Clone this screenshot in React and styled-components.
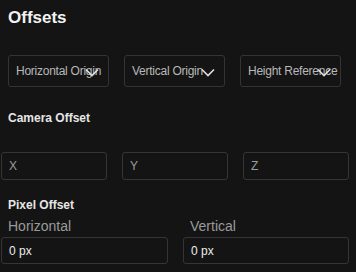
import React from 'react'
import styled, { createGlobalStyle } from 'styled-components'

const Global = createGlobalStyle`
  html, body { margin:0; padding:0; background:#141414; }
  body { font-family: "Liberation Sans", Arial, sans-serif; }
  * { box-sizing:border-box; }
`

const Panel = styled.div`
  width:356px;
  height:272px;
  padding-top:8px;
  background:#141414;
  display:flex;
  flex-direction:column;
  overflow:hidden;
`
const Title = styled.h2`
  margin:0 0 0 8px;
  font-size:17px;
  line-height:20px;
  font-weight:700;
  color:#f2f2f2;
`
const SelectRow = styled.div`
  display:grid;
  grid-template-columns:repeat(3, 101px);
  column-gap:15px;
  margin:27px 0 0 8px;
`
const SelectBox = styled.div`
  position:relative;
  height:32px;
  border:1px solid #343434;
  border-radius:3px;
  display:flex;
  align-items:center;
  padding-left:7px;
  white-space:nowrap;
  font-size:12px;
  letter-spacing:-0.25px;
  color:#b8b8b8;
`
const Chevron = styled.svg`
  position:absolute;
  right:9px;
  top:12px;
`
const Section = styled.div`
  margin:${p => p.$top}px 0 0 8px;
  font-size:12px;
  line-height:14px;
  font-weight:700;
  color:#e6e6e6;
`
const InputRow = styled.div`
  display:grid;
  grid-template-columns:${p => p.$cols};
  column-gap:15px;
  margin:${p => p.$top}px 0 0 1px;
`
const Field = styled.div`
  display:flex;
  flex-direction:column;
`
const FieldLabel = styled.div`
  font-size:14px;
  line-height:16px;
  color:#9a9a9a;
  margin:0 0 3px 7px;
`
const Input = styled.div`
  height:${p => p.$h}px;
  border:1px solid #353535;
  border-radius:3px;
  display:flex;
  align-items:center;
  padding-left:7px;
  font-size:12px;
  color:${p => (p.$value ? '#ececec' : '#9c9c9c')};
`

const Select = ({ label }) => (
  <SelectBox>
    {label}
    <Chevron width="14" height="9" viewBox="0 0 14 9">
      <polyline points="1,1.5 7,7.5 13,1.5" fill="none" stroke="#e0e0e0" strokeWidth="1.6" />
    </Chevron>
  </SelectBox>
)

export default function App() {
  return (
    <>
      <Global />
      <Panel>
        <Title>Offsets</Title>
        <SelectRow>
          <Select label="Horizontal Origin" />
          <Select label="Vertical Origin" />
          <Select label="Height Reference" />
        </SelectRow>

        <Section $top={24}>Camera Offset</Section>
        <InputRow $cols="106px 106px 106px" $top={27}>
          <Input $h={28}>X</Input>
          <Input $h={28}>Y</Input>
          <Input $h={28}>Z</Input>
        </InputRow>

        <Section $top={18}>Pixel Offset</Section>
        <InputRow $cols="167px 166px" $top={6}>
          <Field>
            <FieldLabel>Horizontal</FieldLabel>
            <Input $h={27} $value>0 px</Input>
          </Field>
          <Field>
            <FieldLabel>Vertical</FieldLabel>
            <Input $h={27} $value>0 px</Input>
          </Field>
        </InputRow>
      </Panel>
    </>
  )
}
